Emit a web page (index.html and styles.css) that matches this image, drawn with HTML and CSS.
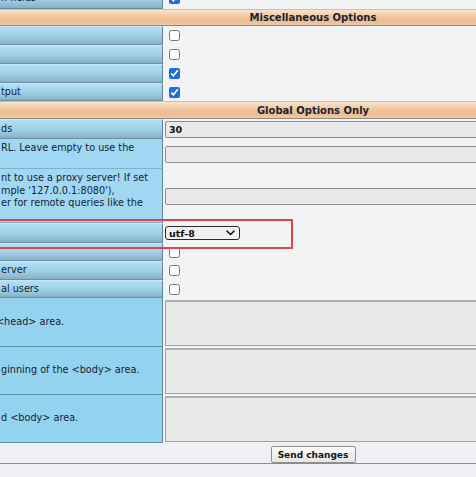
FILE: index.html
```html
<!DOCTYPE html>
<html lang="en">
<head>
<meta charset="utf-8">
<title>Options</title>
<link rel="stylesheet" href="styles.css">
</head>
<body>
<div class="page">
  <div class="form">
    <div class="lbl grad"><span>n fields</span></div>
    <div class="val"><input class="cb" type="checkbox" checked></div>

    <div class="hdr">Miscellaneous Options</div>

    <div class="lbl grad"></div>
    <div class="val"><input class="cb" type="checkbox"></div>
    <div class="lbl grad"></div>
    <div class="val"><input class="cb" type="checkbox"></div>
    <div class="lbl grad"></div>
    <div class="val"><input class="cb" type="checkbox" checked></div>
    <div class="lbl grad"><span>tput</span></div>
    <div class="val"><input class="cb" type="checkbox" checked></div>

    <div class="hdr">Global Options Only</div>

    <div class="lbl grad"><span>ds</span></div>
    <div class="val"><input class="txt strong" type="text" value="30"></div>
    <div class="lbl flat top"><span>RL. Leave empty to use the</span></div>
    <div class="val"><input class="txt" type="text"></div>
    <div class="lbl flat top proxy"><span>nt to use a proxy server! If set<br>mple '127.0.0.1:8080'),<br>er for remote queries like the</span></div>
    <div class="val"><input class="txt" type="text"></div>

    <div class="lbl grad"></div>
    <div class="val"><div class="select"><span>utf-8</span><svg width="9" height="6" viewBox="0 0 9 6"><path d="M1 1.2 L4.5 4.5 L8 1.2" fill="none" stroke="#1a1a1a" stroke-width="1.6" stroke-linecap="round" stroke-linejoin="round"/></svg></div></div>
    <div class="lbl grad"></div>
    <div class="val"><input class="cb" type="checkbox"></div>
    <div class="lbl grad"><span>erver</span></div>
    <div class="val"><input class="cb" type="checkbox"></div>
    <div class="lbl grad"><span>al users</span></div>
    <div class="val"><input class="cb" type="checkbox"></div>

    <div class="lbl ta"><span class="lt">&lt;head&gt; area.</span></div>
    <div class="val"><textarea class="area"></textarea></div>
    <div class="lbl ta"><span>ginning of the &lt;body&gt; area.</span></div>
    <div class="val"><textarea class="area"></textarea></div>
    <div class="lbl ta"><span>d &lt;body&gt; area.</span></div>
    <div class="val"><textarea class="area"></textarea></div>

    <div class="foot"><button class="send" type="button">Send changes</button></div>
  </div>
  <div class="mark"></div>
</div>
</body>
</html>
```

FILE: styles.css
```css
html, body {
  margin: 0;
  padding: 0;
  overflow: hidden;
  background: #eff1f4;
}

.page {
  position: relative;
  width: 476px;
  height: 477px;
  overflow: hidden;
  font-family: "DejaVu Sans", Verdana, sans-serif;
  color: #17222f;
}

.form {
  display: grid;
  grid-template-columns: 163px 463px;
  grid-template-rows: 21px 17px 19px 19px 19px 18px 18px 20px 30px 54px 20px 18px 19px 18px 49px 48px 48px 21px;
  width: 626px;
  margin-top: -12px;
}

.lbl {
  box-sizing: border-box;
  display: flex;
  align-items: center;
  font-size: 9.7px;
  line-height: 12.5px;
  white-space: nowrap;
  overflow: hidden;
  padding-left: 1px;
  border-right: 1px solid #62879b;
}

.lbl.grad {
  background: linear-gradient(to bottom, #b2e0f5 0%, #a2d3eb 45%, #90bcd2 85%, #86aec2 100%);
  border-top: 1px solid #c9e8f6;
  border-bottom: 1px solid #6e90a3;
}

.lbl.flat {
  background: #a0d8f3;
  border-bottom: 1px solid #7fb3cc;
}

.lbl.top {
  align-items: flex-start;
  padding-top: 3px;
}

.lbl.proxy {
  padding-top: 3px;
}

.lbl.ta {
  background: #93d3f0;
  border-bottom: 1px solid #5f93ac;
}

.lt {
  margin-left: -5px;
}

.val {
  box-sizing: border-box;
  display: flex;
  align-items: center;
  padding-left: 2px;
  background: #f2f3f5;
}

.hdr {
  grid-column: 1 / -1;
  box-sizing: border-box;
  display: flex;
  align-items: center;
  justify-content: center;
  background: linear-gradient(to bottom, #f9e3cd 0%, #f1c9a2 40%, #ebbc90 75%, #f0cba7 100%);
  border-top: 1px solid #c6c0b8;
  border-bottom: 1px solid #8f8a86;
  font-size: 10px;
  font-weight: bold;
  color: #1b2230;
}

.cb {
  width: 11px;
  height: 11px;
  margin: 0 0 0 4px;
  accent-color: #1f6fd6;
}

.txt {
  box-sizing: border-box;
  width: 100%;
  height: 17px;
  margin: 0;
  padding: 0 3px;
  border: 1px solid #8c8c8c;
  border-radius: 2px;
  background: #e9e9e9;
  font-family: "DejaVu Sans", Verdana, sans-serif;
  font-size: 9.5px;
  color: #111;
}

.txt.strong {
  font-weight: bold;
}

.select {
  box-sizing: border-box;
  display: flex;
  align-items: center;
  justify-content: space-between;
  width: 75px;
  height: 14px;
  padding: 0 4px 0 3px;
  border: 1px solid #2a2a2a;
  border-radius: 3px;
  background: #efefef;
  font-size: 9.5px;
  font-weight: bold;
  color: #111;
}

.area {
  box-sizing: border-box;
  width: 100%;
  height: 46px;
  margin: 0;
  border: 1px solid #9ea3a6;
  border-top: 2px solid #a9b0b4;
  border-radius: 1px;
  background: #e9e9e7;
  resize: none;
}

.foot {
  grid-column: 1 / -1;
  box-sizing: border-box;
  display: flex;
  justify-content: center;
  align-items: flex-start;
  padding-top: 3px;
  background: #eef0f3;
  border-bottom: 1px solid #8a8d90;
}

.send {
  box-sizing: border-box;
  height: 17px;
  width: 85px;
  padding: 0;
  border: 1px solid #8e8e8e;
  border-radius: 2px;
  background: linear-gradient(to bottom, #fafafa, #e6e6e6);
  font-family: "DejaVu Sans", Verdana, sans-serif;
  font-size: 9px;
  font-weight: bold;
  color: #151515;
}

.mark {
  position: absolute;
  left: -4px;
  top: 219px;
  width: 297px;
  height: 30px;
  box-sizing: border-box;
  border: 2px solid #e2434b;
}
```
